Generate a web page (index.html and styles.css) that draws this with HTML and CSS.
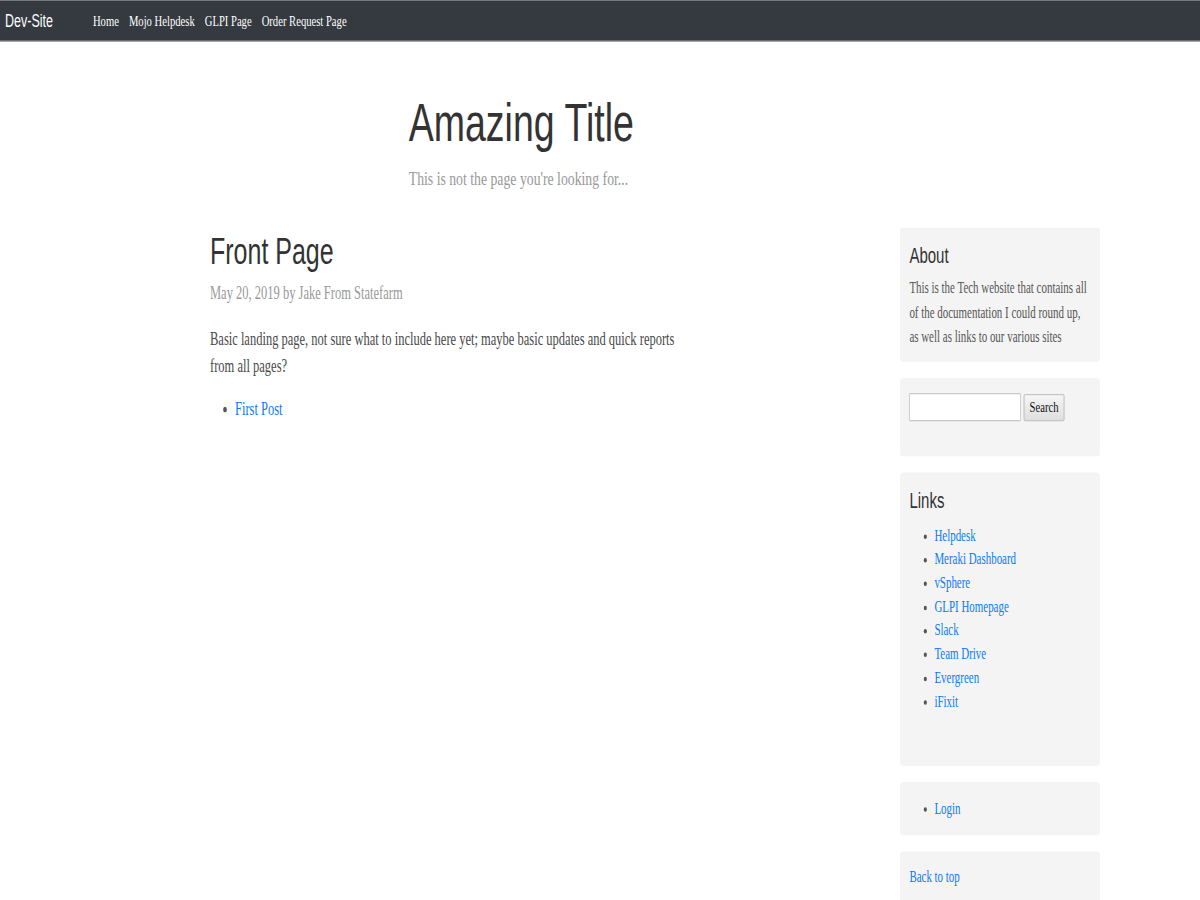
FILE: index.html
```html
<!DOCTYPE html>
<html lang="en">
<head>
<meta charset="utf-8">
<title>Dev-Site</title>
<link rel="stylesheet" href="styles.css">
</head>
<body>
<div class="viewport">
<div class="page">
  <nav class="navbar">
    <a class="brand" href="#">Dev-Site</a>
    <ul class="nav-links">
      <li><a href="#">Home</a></li>
      <li><a href="#">Mojo Helpdesk</a></li>
      <li><a href="#">GLPI Page</a></li>
      <li><a href="#">Order Request Page</a></li>
    </ul>
  </nav>

  <header class="blog-header">
    <h1 class="blog-title">Amazing Title</h1>
    <p class="blog-description">This is not the page you're looking for...</p>
  </header>

  <div class="row">
    <main class="blog-main">
      <h2 class="post-title">Front Page</h2>
      <p class="post-meta">May 20, 2019 by Jake From Statefarm</p>
      <p class="post-text">Basic landing page, not sure what to include here yet; maybe basic updates and quick reports from all pages?</p>
      <ul class="post-list">
        <li><a href="#">First Post</a></li>
      </ul>
    </main>

    <aside class="sidebar">
      <div class="module module-about">
        <h4 class="module-title">About</h4>
        <p class="module-text">This is the Tech website that contains all of the documentation I could round up, as well as links to our various sites</p>
      </div>

      <div class="module module-search">
        <form class="search-form">
          <input class="search-input" type="text">
          <button class="search-button" type="button">Search</button>
        </form>
      </div>

      <div class="module module-links">
        <h4 class="module-title">Links</h4>
        <ul class="module-list module-list-links">
          <li><a href="#">Helpdesk</a></li>
          <li><a href="#">Meraki Dashboard</a></li>
          <li><a href="#">vSphere</a></li>
          <li><a href="#">GLPI Homepage</a></li>
          <li><a href="#">Slack</a></li>
          <li><a href="#">Team Drive</a></li>
          <li><a href="#">Evergreen</a></li>
          <li><a href="#">iFixit</a></li>
        </ul>
      </div>

      <div class="module module-login">
        <ul class="module-list">
          <li><a href="#">Login</a></li>
        </ul>
      </div>

      <div class="module module-top">
        <p class="module-text"><a href="#">Back to top</a></p>
      </div>
    </aside>
  </div>
</div>
</div>
</body>
</html>
```
FILE: styles.css
```css
html, body {
  margin: 0;
  padding: 0;
  background: #ffffff;
  overflow: hidden;
}

.viewport {
  width: 1200px;
  height: 900px;
  overflow: hidden;
}

/* The page is laid out at 1920x1000 and shown condensed, as in the reference */
.page {
  width: 1920px;
  transform: scale(0.625, 0.9);
  transform-origin: 0 0;
  font-family: "Liberation Serif", "Times New Roman", serif;
  color: #555555;
}

a {
  color: #0a7bf6;
  text-decoration: none;
}

/* Navbar */
.navbar {
  display: flex;
  align-items: center;
  height: 44px;
  background: #343a40;
  border-top: 1px solid #7d8185;
  border-bottom: 1px solid #9a9da0;
  padding-left: 8px;
}

.brand {
  font-family: "Liberation Sans", Arial, sans-serif;
  font-size: 20px;
  line-height: 44px;
  color: #ffffff;
  margin-right: 56px;
}

.nav-links {
  display: flex;
  list-style: none;
  margin: 0;
  padding: 0;
}

.nav-links a {
  display: block;
  padding: 1px 8px 0;
  font-size: 17px;
  line-height: 44px;
  color: #ffffff;
}

/* Header */
.blog-header {
  padding-left: 654px;
  padding-top: 58px;
}

.blog-title {
  margin: 0;
  font-family: "Liberation Sans", Arial, sans-serif;
  font-weight: normal;
  font-size: 60px;
  line-height: 66px;
  color: #333333;
}

.blog-description {
  margin: 13px 0 0;
  font-size: 22px;
  line-height: 30.8px;
  color: #999999;
}

/* Two columns */
.row {
  display: flex;
  align-items: flex-start;
  padding-left: 336px;
  margin-top: 39px;
}

.blog-main {
  width: 750px;
  padding-top: 4px;
  font-size: 20px;
  line-height: 30px;
}

.post-title {
  margin: 0 0 9px;
  font-family: "Liberation Sans", Arial, sans-serif;
  font-weight: normal;
  font-size: 40px;
  line-height: 44px;
  color: #333333;
}

.post-meta {
  margin: 0 0 21px;
  color: #999999;
}

.post-text {
  margin: 0 0 18px;
  color: #4a4a4a;
}

.post-list {
  margin: 0;
  padding-left: 40px;
  color: #555555;
}

/* Sidebar */
.sidebar {
  width: 320px;
  margin-left: 354px;
  display: flex;
  flex-direction: column;
  gap: 18px;
  font-size: 17.5px;
  line-height: 26.7px;
}

.module {
  background: #f4f4f4;
  border-radius: 5px / 4px;
  padding: 15px 16px 15px 15px;
}

.module-title {
  margin: 3px 0 10px;
  font-family: "Liberation Sans", Arial, sans-serif;
  font-weight: normal;
  font-size: 24px;
  line-height: 26.4px;
  color: #333333;
}

.module-text {
  margin: 0;
  color: #555555;
}

.module-about {
  padding-bottom: 15px;
}

.module-list {
  margin: 0;
  padding-left: 40px;
  color: #555555;
}

.module-list-links {
  margin-top: 12px;
  line-height: 26.3px;
  margin-bottom: 44px;
}

.module-login {
  padding-top: 16px;
  padding-bottom: 16px;
}

.module-top {
  padding-bottom: 40px;
}

/* Search form */
.module-search {
  padding-top: 17px;
  padding-bottom: 39px;
}

.search-form {
  display: flex;
  align-items: center;
  gap: 5px;
  margin: 0;
}

.search-input {
  box-sizing: border-box;
  width: 178px;
  height: 31px;
  margin: 0;
  padding: 0 4px;
  background: #ffffff;
  border-style: solid;
  border-color: #b4b4b4;
  border-width: 1px 1.6px;
  border-radius: 0;
  outline: none;
}

.search-button {
  box-sizing: border-box;
  width: 65px;
  height: 30px;
  margin: 0;
  padding: 0;
  font-family: "Liberation Serif", "Times New Roman", serif;
  font-size: 17px;
  color: #111111;
  background: linear-gradient(#f6f6f6, #dedede);
  border-style: solid;
  border-color: #a8a8a8;
  border-width: 1px 1.6px;
  border-radius: 2px;
}
```
